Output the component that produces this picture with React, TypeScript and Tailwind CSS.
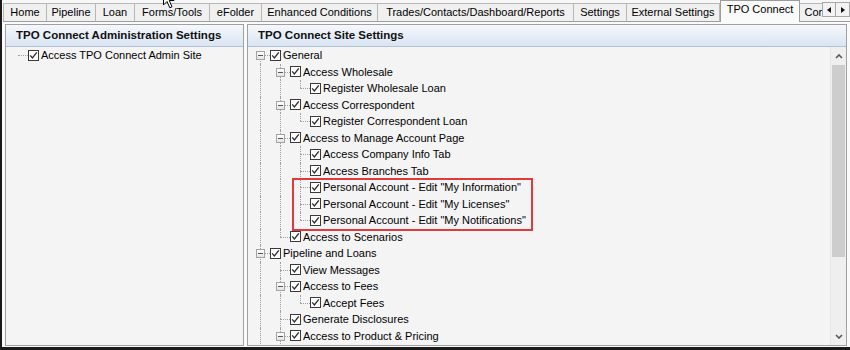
import React from 'react';

type Node = { label: string; children?: Node[] };

type Row = {
    label: string;
    level: number;
    guides: boolean[];
    hasChildren: boolean;
    isFirst: boolean;
    isLast: boolean;
};

const tabs = [
    { label: 'Home', w: 'w-[44px]' },
    { label: 'Pipeline', w: 'w-[49px]' },
    { label: 'Loan', w: 'w-[39px]' },
    { label: 'Forms/Tools', w: 'w-[75px]' },
    { label: 'eFolder', w: 'w-[52px]' },
    { label: 'Enhanced Conditions', w: 'w-[116px]' },
    { label: 'Trades/Contacts/Dashboard/Reports', w: 'w-[196px]' },
    { label: 'Settings', w: 'w-[53px]' },
    { label: 'External Settings', w: 'w-[93px]' },
];

const siteTree: Node[] = [
    {
        label: 'General',
        children: [
            { label: 'Access Wholesale', children: [{ label: 'Register Wholesale Loan' }] },
            { label: 'Access Correspondent', children: [{ label: 'Register Correspondent Loan' }] },
            {
                label: 'Access to Manage Account Page',
                children: [
                    { label: 'Access Company Info Tab' },
                    { label: 'Access Branches Tab' },
                    { label: 'Personal Account - Edit "My Information"' },
                    { label: 'Personal Account - Edit "My Licenses"' },
                    { label: 'Personal Account - Edit "My Notifications"' },
                ],
            },
            { label: 'Access to Scenarios' },
        ],
    },
    {
        label: 'Pipeline and Loans',
        children: [
            { label: 'View Messages' },
            { label: 'Access to Fees', children: [{ label: 'Accept Fees' }] },
            { label: 'Generate Disclosures' },
            {
                label: 'Access to Product & Pricing',
                children: [{ label: 'Access to Pricing' }, { label: 'Submit Lock Requests' }],
            },
            { label: 'Access to Documents' },
        ],
    },
    { label: 'Loan Settings', children: [{ label: 'Edit Loan Officer' }] },
];

const adminTree: Node[] = [{ label: 'Access TPO Connect Admin Site' }];

// rows that fit in the visible part of the tree
const VISIBLE_ROWS = 18;

function flatten(nodes: Node[], level = 0, guides: boolean[] = [], out: Row[] = []): Row[] {
    nodes.forEach((n, i) => {
        const isLast = i === nodes.length - 1;
        out.push({
            label: n.label,
            level,
            guides,
            hasChildren: !!n.children,
            isFirst: level === 0 && i === 0,
            isLast,
        });
        if (n.children) flatten(n.children, level + 1, [...guides, !isLast], out);
    });
    return out;
}

function Checkbox() {
    return (
        <svg width="11" height="11" viewBox="0 0 11 11" className="shrink-0">
            <rect x="0.5" y="0.5" width="10" height="10" fill="#fff" stroke="#3a3a3a" />
            <path d="M2.2 5.4 L4.4 7.9 L8.8 2.4" fill="none" stroke="#2a2a2a" strokeWidth="1.3" />
        </svg>
    );
}

function TreeRow({ row }: { row: Row }) {
    return (
        <div className="flex items-center h-[16.5px]">
            {row.guides.map((g, i) => (
                <span key={i} className="relative w-[20px] h-full shrink-0">
                    {g && <span className="absolute left-[10px] top-0 bottom-0 border-l border-dotted border-[#a0a0a0]" />}
                </span>
            ))}
            <span className="relative w-[20px] h-full shrink-0">
                {!row.isFirst && <span className="absolute left-[10px] top-0 h-[8px] border-l border-dotted border-[#a0a0a0]" />}
                {!row.isLast && <span className="absolute left-[10px] top-[8px] bottom-0 border-l border-dotted border-[#a0a0a0]" />}
                <span className="absolute left-[10px] right-0 top-[8px] border-t border-dotted border-[#a0a0a0]" />
                {row.hasChildren && (
                    <span className="absolute left-[6px] top-[4px] w-[9px] h-[9px] border border-[#a3a3a3] bg-linear-to-b from-white to-[#e4e4e4] flex items-center justify-center">
                        <span className="w-[5px] h-px bg-[#555]" />
                    </span>
                )}
            </span>
            <Checkbox />
            <span className="ml-[2px] whitespace-nowrap">{row.label}</span>
        </div>
    );
}

function PanelHeader({ title }: { title: string }) {
    return (
        <div className="h-[22px] shrink-0 border-b border-[#b4c2d3] bg-linear-to-b from-[#f5f8fc] to-[#d9e5f3] flex items-center pl-[10px] font-bold text-[11.5px] text-[#111]">
            {title}
        </div>
    );
}

function Chevron({ down }: { down?: boolean }) {
    return (
        <svg width="8" height="5" viewBox="0 0 8 5">
            <path d={down ? 'M1 1 L4 4 L7 1' : 'M1 4 L4 1 L7 4'} fill="none" stroke="#555" strokeWidth="1.6" />
        </svg>
    );
}

export default function App() {
    const siteRows = flatten(siteTree).slice(0, VISIBLE_ROWS);
    const adminRows = flatten(adminTree);

    return (
        <div className="relative w-[850px] h-[350px] overflow-hidden bg-[#fafafa] border-l-2 border-b-[3px] border-[#1a1a1a] text-[11px] text-black font-['Liberation_Sans',Arial,sans-serif]">
            {/* tab strip */}
            <div className="flex h-[22px] bg-[#f7f7f7]">
                <div className="flex flex-1 items-end overflow-hidden pl-[1px]">
                    {tabs.map((t, i) => (
                        <div
                            key={t.label}
                            className={`${t.w} ${i === 0 ? 'border-l' : ''} h-[19px] shrink-0 flex items-center justify-center whitespace-nowrap bg-[#f0f0f0] border-t border-r border-b border-[#b7b7b7] border-b-[#9c9c9c]`}
                        >
                            {t.label}
                        </div>
                    ))}
                    <div className="w-[80px] h-[22px] shrink-0 flex items-center justify-center pb-[4px] whitespace-nowrap bg-[#fafafa] border-t border-x border-[#9c9c9c]">
                        TPO Connect
                    </div>
                    <div className="w-[100px] h-[19px] shrink-0 flex items-center justify-center whitespace-nowrap bg-[#f0f0f0] border-t border-r border-b border-[#b7b7b7] border-b-[#9c9c9c]">
                        Company Settings
                    </div>
                </div>
                <div className="w-[28px] shrink-0 flex items-start pt-[2px] border-b border-[#9c9c9c]">
                    <div className="w-[14px] h-[15px] border border-[#a8a8a8] bg-[#f3f3f3] flex items-center justify-center">
                        <svg width="4" height="6" viewBox="0 0 4 6"><path d="M4 0 L0 3 L4 6 Z" fill="#111" /></svg>
                    </div>
                    <div className="w-[14px] h-[15px] border border-l-0 border-[#a8a8a8] bg-[#f3f3f3] flex items-center justify-center">
                        <svg width="4" height="6" viewBox="0 0 4 6"><path d="M0 0 L4 3 L0 6 Z" fill="#111" /></svg>
                    </div>
                </div>
            </div>

            {/* panels */}
            <div className="flex gap-[3px] pl-[3px] pt-[2px] h-[325px]">
                <div className="w-[239px] h-[322px] border border-[#a0a0a0] flex flex-col">
                    <PanelHeader title="TPO Connect Administration Settings" />
                    <div className="flex-1 bg-[#f4f4f4] pl-[2px]">
                        {adminRows.map((r, i) => (
                            <TreeRow key={i} row={r} />
                        ))}
                    </div>
                </div>

                <div className="w-[600px] h-[322px] border border-[#a0a0a0] flex flex-col">
                    <PanelHeader title="TPO Connect Site Settings" />
                    <div className="flex-1 flex bg-[#f4f4f4] overflow-hidden">
                        <div className="relative flex-1 overflow-hidden pl-[2px]">
                            {siteRows.map((r, i) => (
                                <TreeRow key={i} row={r} />
                            ))}
                            <div className="absolute left-[44px] top-[131px] w-[241px] h-[53px] border-2 border-[#df3b3e]" />
                        </div>
                        <div className="w-[16px] shrink-0 flex flex-col bg-[#efefef] border-l border-[#e6e6e6]">
                            <div className="h-[18px] flex items-center justify-center">
                                <Chevron />
                            </div>
                            <div className="mx-[1px] h-[192px] bg-[#cdcdcd]" />
                            <div className="flex-1" />
                            <div className="h-[18px] flex items-center justify-center">
                                <Chevron down />
                            </div>
                        </div>
                    </div>
                </div>
            </div>

            {/* mouse pointer, cut off at the top */}
            <svg className="absolute left-[161px] top-[-11px]" width="13" height="20" viewBox="0 0 13 20">
                <path d="M0.5 0.5 L0.5 16 L4 12.5 L6.8 18.8 L9 17.8 L6.3 11.5 L11 11.5 Z" fill="#fff" stroke="#000" />
            </svg>
        </div>
    );
}
